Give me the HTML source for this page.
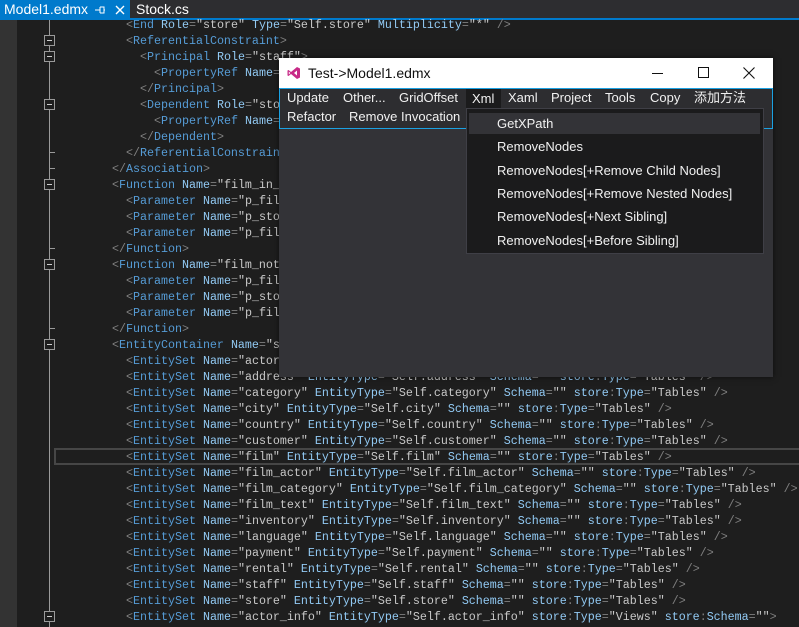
<!DOCTYPE html>
<html><head><meta charset="utf-8"><style>
*{margin:0;padding:0;box-sizing:border-box}
body{width:799px;height:627px;overflow:hidden;background:#1e1e1e;position:relative;font-family:"Liberation Sans","Noto Sans CJK SC",sans-serif}
#tabs{position:absolute;left:0;top:0;width:799px;height:20px;background:#2d2d30;border-bottom:2px solid #007acc}
.tab1{position:absolute;left:0;top:0;width:130px;height:20px;background:#007acc;color:#fff;font-size:14px;line-height:19px;white-space:nowrap}
.tab2{position:absolute;left:136px;top:0;color:#fff;font-size:14px;line-height:19px}
#margin{position:absolute;left:0;top:20px;width:17px;height:607px;background:#333333}
.vl{position:absolute;left:49px;top:20px;width:1px;height:607px;background:#9a9a9a}
.fold{position:absolute;left:44px;width:11px;height:11px;border:1px solid #9a9a9a;background:#1e1e1e}
.fold:after{content:"";position:absolute;left:2px;top:4px;width:5px;height:1px;background:#ccc}
.tk{position:absolute;left:50px;width:5px;height:1px;background:#9a9a9a}
.ln{position:absolute;height:16px;line-height:16px;font-family:"Liberation Mono",monospace;font-size:11.67px;white-space:pre;color:#c8c8c8}
.b{color:#808080}.t{color:#569cd6}.a{color:#92caf4}
.hl{position:absolute;left:54px;top:448px;width:760px;height:17px;border:2px solid #464646}
#win{position:absolute;left:279px;top:58px;width:494px;height:319px;background:#333337;box-shadow:0 0 6px rgba(0,0,0,.6)}
#title{position:absolute;left:0;top:0;width:494px;height:30px;background:#fff;color:#111;font-size:14px;line-height:30px}
#menu{position:absolute;left:0;top:30px;width:494px;height:41px;border:1px solid #1ba1e2;background:#2d2d30}
.mi{position:absolute;color:#f1f1f1;font-size:13px;line-height:18px;white-space:nowrap}
#dd{position:absolute;left:466px;top:108px;width:298px;height:146px;background:#1b1b1c;border:1px solid #3f3f46}
.di{position:absolute;left:30px;color:#f1f1f1;font-size:13px;white-space:nowrap}
</style></head><body>
<div id="tabs"><div class="tab1"><span style="position:absolute;left:4px">Model1.edmx</span>
<svg style="position:absolute;left:95px;top:5px" width="11" height="10" viewBox="0 0 11 10"><path d="M0 5 H5 M5 2 V8 M5 2 H9 V8 H5 M9 5 H10" stroke="#fff" fill="none" stroke-width="1"/></svg>
<svg style="position:absolute;left:115px;top:5px" width="10" height="10" viewBox="0 0 10 10"><path d="M1 1 L9 9 M9 1 L1 9" stroke="#fff" stroke-width="1.4"/></svg></div><div class="tab2">Stock.cs</div></div>
<div id="margin"></div>
<div class="vl"></div>
<div class="fold" style="top:35px"></div><div class="fold" style="top:51px"></div><div class="fold" style="top:99px"></div>
<div class="fold" style="top:179px"></div><div class="fold" style="top:259px"></div><div class="fold" style="top:339px"></div><div class="fold" style="top:611px"></div>
<div class="tk" style="top:152px"></div><div class="tk" style="top:168px"></div><div class="tk" style="top:248px"></div><div class="tk" style="top:328px"></div>
<div class="hl"></div>
<div class="ln" style="left:126px;top:17px"><span class="b">&lt;</span><span class="t">End</span> <span class="a">Role</span><span class="b">=</span>"store" <span class="a">Type</span><span class="b">=</span>"Self.store" <span class="a">Multiplicity</span><span class="b">=</span>"*" <span class="b">/&gt;</span></div>
<div class="ln" style="left:126px;top:33px"><span class="b">&lt;</span><span class="t">ReferentialConstraint</span><span class="b">&gt;</span></div>
<div class="ln" style="left:140px;top:49px"><span class="b">&lt;</span><span class="t">Principal</span> <span class="a">Role</span><span class="b">=</span>"staff"<span class="b">&gt;</span></div>
<div class="ln" style="left:154px;top:65px"><span class="b">&lt;</span><span class="t">PropertyRef</span> <span class="a">Name</span><span class="b">=</span>"staff_id" <span class="b">/&gt;</span></div>
<div class="ln" style="left:140px;top:81px"><span class="b">&lt;/</span><span class="t">Principal</span><span class="b">&gt;</span></div>
<div class="ln" style="left:140px;top:97px"><span class="b">&lt;</span><span class="t">Dependent</span> <span class="a">Role</span><span class="b">=</span>"store"<span class="b">&gt;</span></div>
<div class="ln" style="left:154px;top:113px"><span class="b">&lt;</span><span class="t">PropertyRef</span> <span class="a">Name</span><span class="b">=</span>"manager" <span class="b">/&gt;</span></div>
<div class="ln" style="left:140px;top:129px"><span class="b">&lt;/</span><span class="t">Dependent</span><span class="b">&gt;</span></div>
<div class="ln" style="left:126px;top:145px"><span class="b">&lt;/</span><span class="t">ReferentialConstraint</span><span class="b">&gt;</span></div>
<div class="ln" style="left:112px;top:161px"><span class="b">&lt;/</span><span class="t">Association</span><span class="b">&gt;</span></div>
<div class="ln" style="left:112px;top:177px"><span class="b">&lt;</span><span class="t">Function</span> <span class="a">Name</span><span class="b">=</span>"film_in_stock" <span class="a">Aggregate</span><span class="b">=</span>"false" <span class="a">BuiltIn</span><span class="b">=</span>"false" <span class="a">NiladicFunction</span><span class="a">Composal</span></div>
<div class="ln" style="left:126px;top:193px"><span class="b">&lt;</span><span class="t">Parameter</span> <span class="a">Name</span><span class="b">=</span>"p_film_id"</div>
<div class="ln" style="left:126px;top:209px"><span class="b">&lt;</span><span class="t">Parameter</span> <span class="a">Name</span><span class="b">=</span>"p_store_id"</div>
<div class="ln" style="left:126px;top:225px"><span class="b">&lt;</span><span class="t">Parameter</span> <span class="a">Name</span><span class="b">=</span>"p_film_count"</div>
<div class="ln" style="left:112px;top:241px"><span class="b">&lt;/</span><span class="t">Function</span><span class="b">&gt;</span></div>
<div class="ln" style="left:112px;top:257px"><span class="b">&lt;</span><span class="t">Function</span> <span class="a">Name</span><span class="b">=</span>"film_not_in_stock" <span class="a">Aggregate</span><span class="b">=</span>"false" <span class="a">BuiltIn</span><span class="b">=</span>"false" <span class="a">IsComp</span></div>
<div class="ln" style="left:126px;top:273px"><span class="b">&lt;</span><span class="t">Parameter</span> <span class="a">Name</span><span class="b">=</span>"p_film_id"</div>
<div class="ln" style="left:126px;top:289px"><span class="b">&lt;</span><span class="t">Parameter</span> <span class="a">Name</span><span class="b">=</span>"p_store_id"</div>
<div class="ln" style="left:126px;top:305px"><span class="b">&lt;</span><span class="t">Parameter</span> <span class="a">Name</span><span class="b">=</span>"p_film_count"</div>
<div class="ln" style="left:112px;top:321px"><span class="b">&lt;/</span><span class="t">Function</span><span class="b">&gt;</span></div>
<div class="ln" style="left:112px;top:337px"><span class="b">&lt;</span><span class="t">EntityContainer</span> <span class="a">Name</span><span class="b">=</span>"sakilaModelStoreContainer"<span class="b">&gt;</span></div>
<div class="ln" style="left:126px;top:353px"><span class="b">&lt;</span><span class="t">EntitySet</span> <span class="a">Name</span><span class="b">=</span>"actor" <span class="a">EntityType</span><span class="b">=</span>"Self.actor" <span class="a">Schema</span><span class="b">=</span>"" <span class="a">store</span><span class="b">:</span><span class="a">Type</span><span class="b">=</span>"Tables" <span class="b">/&gt;</span></div>
<div class="ln" style="left:126px;top:369px"><span class="b">&lt;</span><span class="t">EntitySet</span> <span class="a">Name</span><span class="b">=</span>"address" <span class="a">EntityType</span><span class="b">=</span>"Self.address" <span class="a">Schema</span><span class="b">=</span>"" <span class="a">store</span><span class="b">:</span><span class="a">Type</span><span class="b">=</span>"Tables" <span class="b">/&gt;</span></div>
<div class="ln" style="left:126px;top:385px"><span class="b">&lt;</span><span class="t">EntitySet</span> <span class="a">Name</span><span class="b">=</span>"category" <span class="a">EntityType</span><span class="b">=</span>"Self.category" <span class="a">Schema</span><span class="b">=</span>"" <span class="a">store</span><span class="b">:</span><span class="a">Type</span><span class="b">=</span>"Tables" <span class="b">/&gt;</span></div>
<div class="ln" style="left:126px;top:401px"><span class="b">&lt;</span><span class="t">EntitySet</span> <span class="a">Name</span><span class="b">=</span>"city" <span class="a">EntityType</span><span class="b">=</span>"Self.city" <span class="a">Schema</span><span class="b">=</span>"" <span class="a">store</span><span class="b">:</span><span class="a">Type</span><span class="b">=</span>"Tables" <span class="b">/&gt;</span></div>
<div class="ln" style="left:126px;top:417px"><span class="b">&lt;</span><span class="t">EntitySet</span> <span class="a">Name</span><span class="b">=</span>"country" <span class="a">EntityType</span><span class="b">=</span>"Self.country" <span class="a">Schema</span><span class="b">=</span>"" <span class="a">store</span><span class="b">:</span><span class="a">Type</span><span class="b">=</span>"Tables" <span class="b">/&gt;</span></div>
<div class="ln" style="left:126px;top:433px"><span class="b">&lt;</span><span class="t">EntitySet</span> <span class="a">Name</span><span class="b">=</span>"customer" <span class="a">EntityType</span><span class="b">=</span>"Self.customer" <span class="a">Schema</span><span class="b">=</span>"" <span class="a">store</span><span class="b">:</span><span class="a">Type</span><span class="b">=</span>"Tables" <span class="b">/&gt;</span></div>
<div class="ln" style="left:126px;top:449px"><span class="b">&lt;</span><span class="t">EntitySet</span> <span class="a">Name</span><span class="b">=</span>"film" <span class="a">EntityType</span><span class="b">=</span>"Self.film" <span class="a">Schema</span><span class="b">=</span>"" <span class="a">store</span><span class="b">:</span><span class="a">Type</span><span class="b">=</span>"Tables" <span class="b">/&gt;</span></div>
<div class="ln" style="left:126px;top:465px"><span class="b">&lt;</span><span class="t">EntitySet</span> <span class="a">Name</span><span class="b">=</span>"film_actor" <span class="a">EntityType</span><span class="b">=</span>"Self.film_actor" <span class="a">Schema</span><span class="b">=</span>"" <span class="a">store</span><span class="b">:</span><span class="a">Type</span><span class="b">=</span>"Tables" <span class="b">/&gt;</span></div>
<div class="ln" style="left:126px;top:481px"><span class="b">&lt;</span><span class="t">EntitySet</span> <span class="a">Name</span><span class="b">=</span>"film_category" <span class="a">EntityType</span><span class="b">=</span>"Self.film_category" <span class="a">Schema</span><span class="b">=</span>"" <span class="a">store</span><span class="b">:</span><span class="a">Type</span><span class="b">=</span>"Tables" <span class="b">/&gt;</span></div>
<div class="ln" style="left:126px;top:497px"><span class="b">&lt;</span><span class="t">EntitySet</span> <span class="a">Name</span><span class="b">=</span>"film_text" <span class="a">EntityType</span><span class="b">=</span>"Self.film_text" <span class="a">Schema</span><span class="b">=</span>"" <span class="a">store</span><span class="b">:</span><span class="a">Type</span><span class="b">=</span>"Tables" <span class="b">/&gt;</span></div>
<div class="ln" style="left:126px;top:513px"><span class="b">&lt;</span><span class="t">EntitySet</span> <span class="a">Name</span><span class="b">=</span>"inventory" <span class="a">EntityType</span><span class="b">=</span>"Self.inventory" <span class="a">Schema</span><span class="b">=</span>"" <span class="a">store</span><span class="b">:</span><span class="a">Type</span><span class="b">=</span>"Tables" <span class="b">/&gt;</span></div>
<div class="ln" style="left:126px;top:529px"><span class="b">&lt;</span><span class="t">EntitySet</span> <span class="a">Name</span><span class="b">=</span>"language" <span class="a">EntityType</span><span class="b">=</span>"Self.language" <span class="a">Schema</span><span class="b">=</span>"" <span class="a">store</span><span class="b">:</span><span class="a">Type</span><span class="b">=</span>"Tables" <span class="b">/&gt;</span></div>
<div class="ln" style="left:126px;top:545px"><span class="b">&lt;</span><span class="t">EntitySet</span> <span class="a">Name</span><span class="b">=</span>"payment" <span class="a">EntityType</span><span class="b">=</span>"Self.payment" <span class="a">Schema</span><span class="b">=</span>"" <span class="a">store</span><span class="b">:</span><span class="a">Type</span><span class="b">=</span>"Tables" <span class="b">/&gt;</span></div>
<div class="ln" style="left:126px;top:561px"><span class="b">&lt;</span><span class="t">EntitySet</span> <span class="a">Name</span><span class="b">=</span>"rental" <span class="a">EntityType</span><span class="b">=</span>"Self.rental" <span class="a">Schema</span><span class="b">=</span>"" <span class="a">store</span><span class="b">:</span><span class="a">Type</span><span class="b">=</span>"Tables" <span class="b">/&gt;</span></div>
<div class="ln" style="left:126px;top:577px"><span class="b">&lt;</span><span class="t">EntitySet</span> <span class="a">Name</span><span class="b">=</span>"staff" <span class="a">EntityType</span><span class="b">=</span>"Self.staff" <span class="a">Schema</span><span class="b">=</span>"" <span class="a">store</span><span class="b">:</span><span class="a">Type</span><span class="b">=</span>"Tables" <span class="b">/&gt;</span></div>
<div class="ln" style="left:126px;top:593px"><span class="b">&lt;</span><span class="t">EntitySet</span> <span class="a">Name</span><span class="b">=</span>"store" <span class="a">EntityType</span><span class="b">=</span>"Self.store" <span class="a">Schema</span><span class="b">=</span>"" <span class="a">store</span><span class="b">:</span><span class="a">Type</span><span class="b">=</span>"Tables" <span class="b">/&gt;</span></div>
<div class="ln" style="left:126px;top:609px"><span class="b">&lt;</span><span class="t">EntitySet</span> <span class="a">Name</span><span class="b">=</span>"actor_info" <span class="a">EntityType</span><span class="b">=</span>"Self.actor_info" <span class="a">store</span><span class="b">:</span><span class="a">Type</span><span class="b">=</span>"Views" <span class="a">store</span><span class="b">:</span><span class="a">Schema</span><span class="b">=</span>""<span class="b">&gt;</span></div>

<div id="win">
 <div id="title">
  <svg style="position:absolute;left:8px;top:8px" width="14" height="14" viewBox="0 0 14 14"><path d="M10 1 L13 2.5 V11.5 L10 13 L4 8 L1.5 10 L0.5 9.5 V4.5 L1.5 4 L4 6 Z M10 4.5 L7 7 L10 9.5 Z M1.8 5.5 V8.5 L3.3 7 Z" fill="#c72a87" fill-rule="evenodd"/></svg>
  <span style="position:absolute;left:29px;top:0">Test-&gt;Model1.edmx</span>
  <div style="position:absolute;left:373px;top:15px;width:11px;height:1px;background:#111"></div>
  <div style="position:absolute;left:419px;top:9px;width:11px;height:11px;border:1px solid #111"></div>
  <svg style="position:absolute;left:464px;top:9px" width="12" height="12" viewBox="0 0 12 12"><path d="M0.5 0.5 L11.5 11.5 M11.5 0.5 L0.5 11.5" stroke="#111" stroke-width="1.1"/></svg>
 </div>
 <div id="menu"></div>
 <div style="position:absolute;left:187px;top:31px;width:35px;height:20px;background:#1b1b1c"></div>
 <span class="mi" style="left:8px;top:31px">Update</span>
 <span class="mi" style="left:64px;top:31px">Other...</span>
 <span class="mi" style="left:120px;top:31px">GridOffset</span>
 <span class="mi" style="left:193px;top:32px">Xml</span>
 <span class="mi" style="left:229px;top:31px">Xaml</span>
 <span class="mi" style="left:272px;top:31px">Project</span>
 <span class="mi" style="left:326px;top:31px">Tools</span>
 <span class="mi" style="left:371px;top:31px">Copy</span>
 <span class="mi" style="left:415px;top:31px">添加方法</span>
 <span class="mi" style="left:8px;top:50px">Refactor</span>
 <span class="mi" style="left:70px;top:50px">Remove Invocation</span>
</div>
<div id="dd">
 <div style="position:absolute;left:2px;top:4px;width:291px;height:21px;background:#333337"></div>
 <span class="di" style="top:7px">GetXPath</span>
 <span class="di" style="top:30px">RemoveNodes</span>
 <span class="di" style="top:54px">RemoveNodes[+Remove Child Nodes]</span>
 <span class="di" style="top:77px">RemoveNodes[+Remove Nested Nodes]</span>
 <span class="di" style="top:100px">RemoveNodes[+Next Sibling]</span>
 <span class="di" style="top:124px">RemoveNodes[+Before Sibling]</span>
</div>
</body></html>
